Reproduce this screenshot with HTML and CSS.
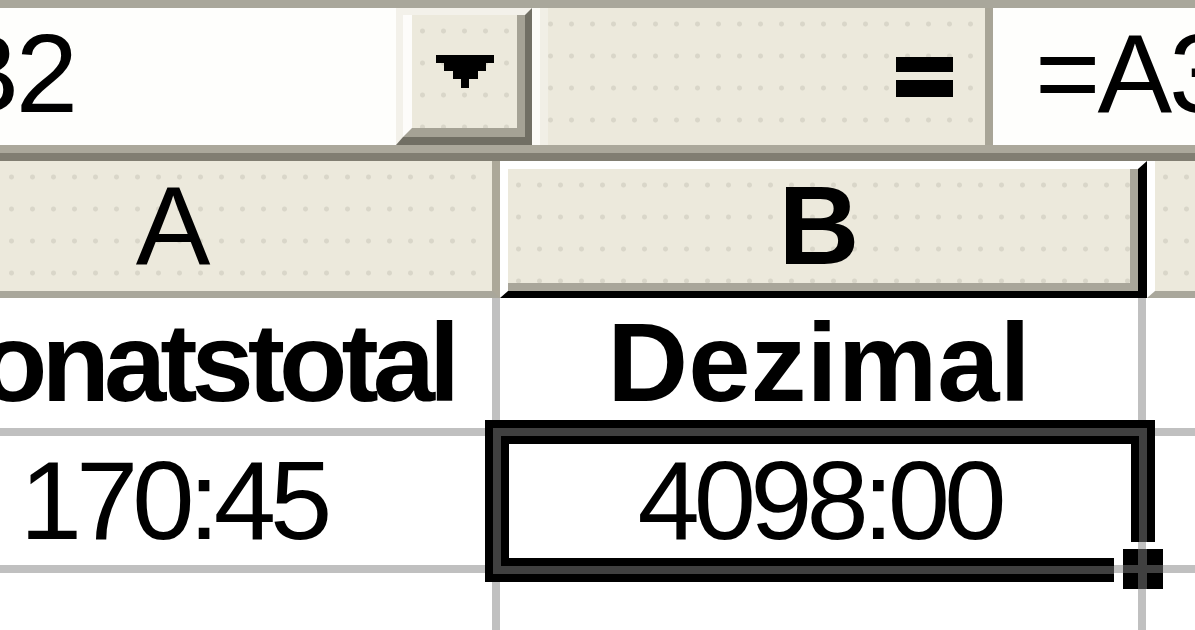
FILE: index.html
```html
<!DOCTYPE html>
<html>
<head>
<meta charset="utf-8">
<title>Mappe1</title>
<link rel="stylesheet" href="styles.css">
</head>
<body>
<div class="formula-bar">
	<div class="namebox">B2</div>
	<div class="namebox-drop">
		<div class="namebox-drop-face">
			<svg width="58" height="33" viewBox="0 0 58 33"><path d="M0 0H58V8H50V16H42V24H33V33H25V24H17V16H8V8H0Z" fill="#000"/></svg>
		</div>
	</div>
	<div class="edit-formula">
		<svg width="57" height="40" viewBox="0 0 57 40"><rect x="0" y="0" width="57" height="15" fill="#000"/><rect x="0" y="23" width="57" height="17" fill="#000"/></svg>
	</div>
	<div class="formula-input">=A3</div>
</div>

<div class="sheet">
	<div class="col-heads">
		<div class="col-head">A</div>
		<div class="col-head selected">B</div>
		<div class="col-head last">C</div>
	</div>
	<div class="cells">
		<div class="cell title narrow">Monatstotal</div>
		<div class="cell title">Dezimal</div>
		<div class="cell"></div>

		<div class="cell">170:45</div>
		<div class="cell active">4098:00
			<div class="selection"></div>
			<div class="fill-handle"></div>
		</div>
		<div class="cell"></div>

		<div class="cell"></div>
		<div class="cell"></div>
		<div class="cell"></div>
	</div>
</div>
</body>
</html>
```

FILE: styles.css
```css
html { margin: 0 }
body {

	margin: 0;
	width: 1195px;
	height: 630px;
	overflow: hidden;
	background: #fff;
	color: #000;
	font-family: "Liberation Sans", Arial, sans-serif;
	font-size: 112px;
	line-height: 1;
}

* { box-sizing: border-box }

/*

	dithered face of the toolbar and header buttons
*/
.namebox-drop-face, .edit-formula, .col-head {

	background: #ece9dc radial-gradient(circle, #d9d6c9 2px, transparent 3px) 0 0 / 21px 32px;
}

/*

	formula bar
*/
.formula-bar {

	display: flex;
	height: 153px;
	border-top: 8px solid #a9a79b;
	border-bottom: 8px solid #aba89b;
}

.namebox {

	flex: 0 0 451px;
	margin-left: -55px;
	background: #fefefc;
	display: flex;
	align-items: center;
	padding-bottom: 5px;
	letter-spacing: -4px;
	white-space: nowrap;
}

.namebox-drop {

	flex: 0 0 136px;
	display: flex;
	border-style: solid;
	border-width: 7px 7px 8px 7px;
	border-color: #f3f1ea #716f64 #716f64 #f3f1ea;
}
.namebox-drop-face {

	flex: 1;
	display: flex;
	align-items: center;
	justify-content: center;
	border-style: solid;
	border-width: 0 8px 9px 9px;
	border-color: #fdfcfa #a5a295 #a5a295 #fdfcfa;
}

.edit-formula {

	flex: 0 0 461px;
	display: flex;
	align-items: center;
	justify-content: flex-end;
	padding-right: 32px;
	border-left: 8px solid #fcfbf7;
	border-right: 8px solid #a8a597;
	box-shadow: inset 8px 0 0 #f1efe6;
}

.formula-input {

	flex: 1;
	display: flex;
	align-items: center;
	padding: 0 0 5px 42px;
	background: #fefefc;
	letter-spacing: -3px;
	white-space: nowrap;
	overflow: hidden;
}

/*

	sheet: column headers and cells
*/
.sheet {

	margin-left: -146px;
	border-top: 8px solid #817e72;
}

.col-heads {

	display: flex;
	height: 137px;
}
.col-head {

	flex: 0 0 646px;
	display: flex;
	align-items: center;
	justify-content: center;
	border-right: 8px solid #aca899;
	border-bottom: 7px solid #a9a79b;
}
.col-head.selected {

	flex-basis: 647px;
	font-weight: bold;
	padding: 0 8px 8px 0;
	border-style: solid;
	border-width: 8px 9px 7px 8px;
	border-color: #fff #000 #000 #fff;
	box-shadow: inset -8px -8px 0 #a9a69a;
}
.col-head.last {

	flex-basis: 646px;
	border-right: 0;
	border-left: 8px solid #fff;
}

.cells {

	display: grid;
	grid-template-columns: 638px 638px 638px;
	grid-template-rows: 130px 129px 100px;
	gap: 8px;
	background: #c0c0c0;
}
.cell {

	background: #fff;
	display: flex;
	align-items: center;
	justify-content: center;
	letter-spacing: -6px;
	white-space: nowrap;
}
.cell.title {

	font-weight: bold;
	letter-spacing: 0;
}
.cell.narrow {

	letter-spacing: -6px;
}

/*

	active cell frame with fill handle
*/
.cell.active {

	position: relative;
}
.selection {

	position: absolute;
	left: -15px;
	top: -16px;
	width: 670px;
	height: 162px;
	border: 8px solid #000;
	box-shadow: inset 0 0 0 8px #404040, inset 0 0 0 16px #000;
	clip-path: polygon(0 0, 100% 0, 100% 122px, 629px 122px, 629px 100%, 0 100%);
}
.fill-handle {

	position: absolute;
	left: 623px;
	top: 113px;
	width: 40px;
	height: 40px;
	background:
		linear-gradient(90deg, transparent 15px, #404040 15px, #404040 24px, transparent 24px),
		linear-gradient(transparent 16px, #404040 16px, #404040 24px, transparent 24px),
		#000;
}
```
